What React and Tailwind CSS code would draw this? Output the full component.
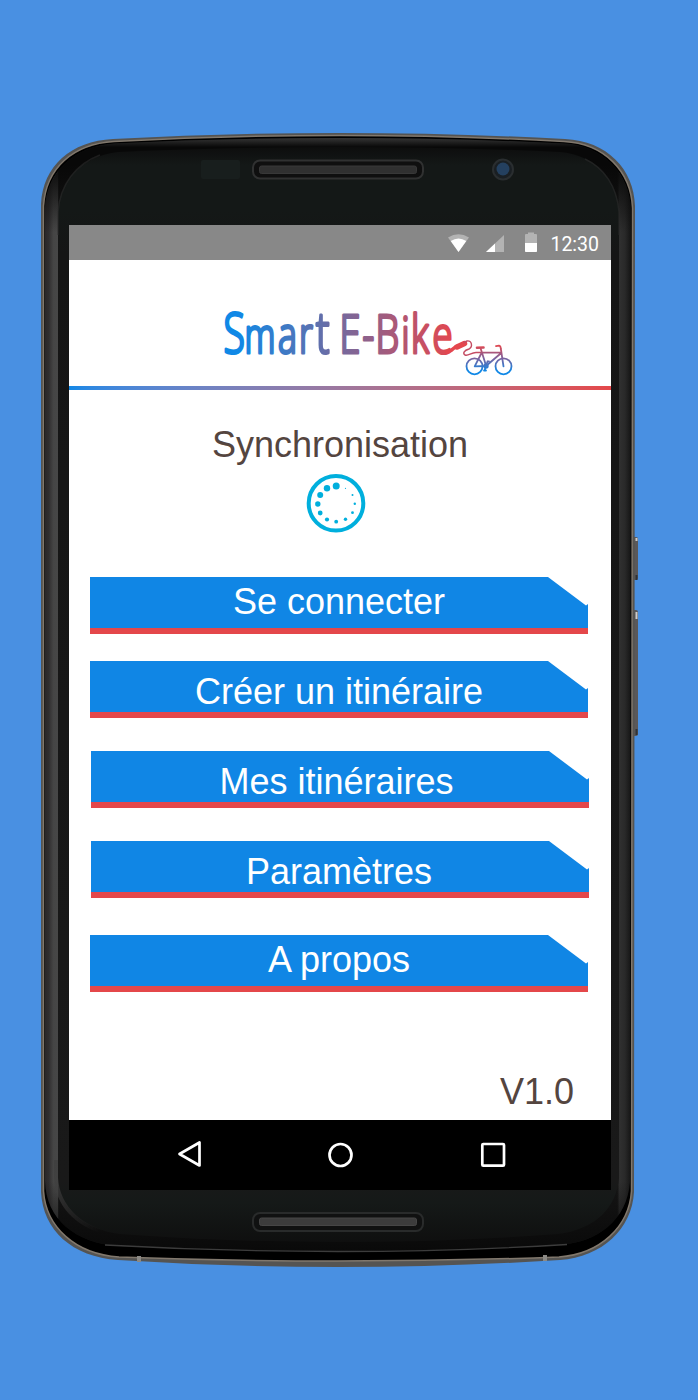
const glyphs = [
  ["S", 223.5, 56],
  ["m", 244.5, 50],
  ["a", 278, 51],
  ["r", 299, 51],
  ["t", 316, 58],
  ["E", 339.5, 54],
  ["-", 362.5, 52],
  ["B", 375.5, 54],
  ["i", 401.5, 50],
  ["k", 411, 53],
  ["e", 432.5, 52],
];

const SQUEEZE = 0.7;

function Logo() {
  return (
    <svg className="h-[126px] w-[542px]" viewBox="69 260 542 126" role="img" aria-label="Smart E-Bike">
      <defs>
        <linearGradient id="word" gradientUnits="userSpaceOnUse" x1={224 / SQUEEZE} y1="0" x2={454 / SQUEEZE} y2="0">
          <stop offset="0.06" stopColor="#1088e6" />
          <stop offset="1" stopColor="#e4474e" />
        </linearGradient>
        <linearGradient id="bike" gradientUnits="userSpaceOnUse" x1="0" y1="346" x2="0" y2="371">
          <stop offset="0" stopColor="#dd4852" />
          <stop offset="0.5" stopColor="#7a63a0" />
          <stop offset="1" stopColor="#1088e6" />
        </linearGradient>
      </defs>
      <text
        y="353.5"
        transform={`scale(${SQUEEZE} 1)`}
        className="font-['Open_Sans',sans-serif] font-light"
        fill="url(#word)"
        stroke="url(#word)"
        strokeWidth="3.2"
        strokeLinejoin="round"
      >
        {glyphs.map(([c, x, size]) => (
          <tspan key={x} x={x / SQUEEZE} fontSize={size}>
            {c}
          </tspan>
        ))}
      </text>
      <g fill="none" strokeLinecap="round" strokeLinejoin="round">
        <path d="M447 352C452 352 454 346 458 346" stroke="#e4474e" strokeWidth="3.5" />
        <path d="M457 347L464.500 343.500" stroke="#e4474e" strokeWidth="5.500" />
        <path d="M464 342.500L467 341C472 340 473 347 469 349C464 350.500 462.500 353 465 355C468 356.500 471 352.500 476 352.500H481" stroke="#c44c63" strokeWidth="1.400" />
        <g stroke="url(#bike)" strokeWidth="1.800">
          <circle cx="474.500" cy="366.300" r="8" />
          <circle cx="503.500" cy="366.300" r="8" />
          <path d="M480.500 348L486 365.500M481.500 352.600L501.500 352.700L486 366L474.700 366.300L481.500 353M496 346.200L499 345.700Q500.500 345.700 500.800 348.500L503.500 366.300" />
          <path d="M477 347.700L483.500 347.500" strokeWidth="2.600" />
          <path d="M487.500 361.500L484.500 370.500M489 361.500H487.500M486 370.500H484" />
          <circle cx="486" cy="366" r="1.800" />
        </g>
      </g>
    </svg>
  );
}

function DeviceBody() {
  return (
    <svg className="absolute inset-0 h-[1400px] w-[698px]" viewBox="0 0 698 1400" fill="none" aria-hidden="true">
      <defs>
        <linearGradient id="side" gradientUnits="userSpaceOnUse" x1="44" y1="0" x2="632" y2="0">
          <stop offset="0" stopColor="#292526" />
          <stop offset="0.008" stopColor="#302e2f" />
          <stop offset="0.016" stopColor="#454545" />
          <stop offset="0.023" stopColor="#474747" />
          <stop offset="0.025" stopColor="#151515" />
          <stop offset="0.975" stopColor="#151515" />
          <stop offset="0.979" stopColor="#303030" />
          <stop offset="0.988" stopColor="#292929" />
          <stop offset="1" stopColor="#111" />
        </linearGradient>
        <linearGradient id="shade" gradientUnits="userSpaceOnUse" x1="0" y1="137" x2="0" y2="1260">
          <stop offset="0" stopColor="#3a3a3a" />
          <stop offset="0.009" stopColor="#080808" />
          <stop offset="0.025" stopColor="#080808" />
          <stop offset="0.085" stopColor="#080808" stopOpacity="0" />
          <stop offset="0.93" stopColor="#080808" stopOpacity="0" />
          <stop offset="1" stopColor="#080808" />
        </linearGradient>
        <linearGradient id="face" gradientUnits="userSpaceOnUse" x1="0" y1="145" x2="0" y2="1247">
          <stop offset="0" stopColor="#0c0c0c" />
          <stop offset="0.018" stopColor="#141817" />
          <stop offset="0.06" stopColor="#141817" />
          <stop offset="0.1" stopColor="#151515" />
          <stop offset="0.94" stopColor="#191919" />
          <stop offset="0.96" stopColor="#151918" />
          <stop offset="1" stopColor="#0e0e0e" />
        </linearGradient>
        <linearGradient id="gloss" gradientUnits="userSpaceOnUse" x1="58" y1="1160" x2="100" y2="1232">
          <stop offset="0" stopColor="#404040" />
          <stop offset="1" stopColor="#404040" stopOpacity="0" />
        </linearGradient>
      </defs>
      <rect x="632" y="537" width="6" height="43" rx="2" fill="#5a5859" />
      <rect x="632" y="610" width="6" height="126" rx="2" fill="#5a5859" />
      <path d="M636.500 538V541M636.500 612V619" stroke="#ccc" strokeWidth="2" />
      <path d="M636.500 575V580M636.500 729V735" stroke="#2f3338" strokeWidth="2" />
      <path
        d="M41 204C43 166 71 141 113 139Q225 133 340 133T565 139C607 141 634 169 635 206L634 1192C632 1229 602 1257 560 1260Q450 1267 338 1267T118 1260C72 1257 43 1230 41 1192Z"
        fill="#555452"
      />
      <path
        d="M43.500 206C46 168 73 144 114 141.500Q225 135.500 340 135.500T564 141.500C604 143.500 631 171 632.500 208L631.500 1191C629 1227 600 1254 559 1257Q450 1261 338 1261T119 1257C75 1254 46 1227 43.500 1191Z"
        fill="#000"
        stroke="#81786d"
        strokeWidth="1.500"
      />
      <path
        d="M45 208C47 172 74 146 115 143.500Q225 138 340 138T563 143.500C602 145 630 173 631 210L630 1182C627 1220 598 1243 557 1245Q450 1251 338 1251T119 1246C75 1243 46 1219 45 1181Z"
        fill="url(#side)"
      />
      <path
        d="M45 208C47 172 74 146 115 143.500Q225 138 340 138T563 143.500C602 145 630 173 631 210L630 1182C627 1220 598 1243 557 1245Q450 1251 338 1251T119 1246C75 1243 46 1219 45 1181Z"
        fill="url(#shade)"
      />
      <path d="M105 1245Q220 1251.500 338 1251.500T567 1244.500" stroke="#3c3c3c" strokeWidth="1.300" />
      <path
        d="M58 212C60 180 82 156 118 152Q225 147 340 147T560 152C596 155 617 180 619 212V1178C616 1208 596 1229 558 1234Q450 1242 338 1242T120 1234C82 1229 60 1208 58 1178Z"
        fill="url(#face)"
      />
      <path d="M58 235V212C60 184 76 164 100 155M619 235V212C617 186 604 168 585 159" stroke="#2c2c2c" strokeWidth="1.500" opacity="0.600" />
      <path d="M56 1160V1178C58 1208 81 1230 118 1235" stroke="url(#gloss)" strokeWidth="4" />

      <rect x="201" y="160" width="39" height="19" rx="2" fill="#181e1d" />
      <g strokeWidth="2">
        <rect x="253" y="160.500" width="170" height="18" rx="7" fill="#0f0f0f" stroke="#303131" />
        <rect x="259.500" y="166" width="157" height="7.500" rx="2" fill="#303030" stroke="#383838" strokeWidth="1" />
        <rect x="253" y="1213" width="170" height="18" rx="7" fill="#101111" stroke="#292b2b" />
        <rect x="259.500" y="1218" width="157" height="7.500" rx="2" fill="#3c3c3c" stroke="#464646" strokeWidth="1" />
      </g>
      <circle cx="503" cy="169.500" r="10" fill="#1a1f23" stroke="#2a2e30" strokeWidth="2" />
      <circle cx="503" cy="169" r="6.500" fill="#24405f" />
      <path d="M139 1256V1262M545 1255V1261" stroke="#8b8985" strokeWidth="4" />
    </svg>
  );
}

function StatusBar() {
  return (
    <div className="flex h-[35px] items-center justify-end bg-[#888888] pr-[12px]">
      <svg className="mr-[10px] h-[35px] w-[92px]" viewBox="448 225 92 35" aria-hidden="true">
        <path d="M448 237.500Q458.500 231 469 237.500L458.500 252Z" fill="#b3b3b3" />
        <path d="M450.700 241Q458.500 236 466.300 241L458.500 252Z" fill="#fff" />
        <path d="M486 252L504 235V252Z" fill="#b3b3b3" />
        <path d="M486 252L495 243.500V252Z" fill="#fff" />
        <path d="M525 252V235Q525 234 526 234H528V232.500H534V234H536Q537 234 537 235V252Z" fill="#b3b3b3" />
        <path d="M525 243H537V251Q537 252 536 252H526Q525 252 525 251Z" fill="#fff" />
      </svg>
      <span className="pt-[4px] font-[Roboto,sans-serif] text-[19.5px] leading-none text-white">12:30</span>
    </div>
  );
}

const dots = [
  [336.7, 486, 3.5],
  [327.5, 488.3, 3.2],
  [320.7, 495, 3],
  [318.3, 504, 2.7],
  [320.7, 513, 2.4],
  [327.5, 519.5, 2.1],
  [336.7, 521.7, 1.9],
  [346, 519.3, 1.7],
  [353, 512.7, 1.4],
  [355.3, 503.7, 1.2],
  [353, 495, 1],
  [346, 488.3, 0.6],
];

function Spinner() {
  return (
    <svg className="h-[60px] w-[60px]" viewBox="306.500 473 60 60" fill="#00afdd" aria-hidden="true">
      <circle cx="336.500" cy="503.300" r="27.300" fill="none" stroke="#00afdd" strokeWidth="4" />
      {dots.map(([x, y, r]) => (
        <circle key={`${x}-${y}`} cx={x} cy={y} r={r} />
      ))}
    </svg>
  );
}

function MenuButton({ label, className }) {
  return (
    <button
      className={`flex h-[57px] w-[498px] shrink-0 justify-center border-b-[6px] border-[#e4474a] bg-[#1086e5] text-[36px] leading-[40px] text-white [clip-path:polygon(0_0,458px_0,496px_28.5px,498px_27px,498px_100%,0_100%)] ${className}`}
    >
      {label}
    </button>
  );
}

function NavBar() {
  return (
    <div className="flex h-[70px] items-center bg-black pl-[107px]">
      <svg className="h-[30px] w-[28px]" viewBox="176 1140 28 30" fill="none" aria-hidden="true">
        <path d="M179.500 1154L199.500 1142.500V1165.500Z" stroke="#fff" strokeWidth="2.700" strokeLinejoin="round" />
      </svg>
      <svg className="ml-[122px] h-[30px] w-[28px]" viewBox="326 1140 28 30" fill="none" aria-hidden="true">
        <circle cx="340.500" cy="1155" r="11" stroke="#fff" strokeWidth="2.700" />
      </svg>
      <svg className="ml-[125px] h-[30px] w-[28px]" viewBox="479 1140 28 30" fill="none" aria-hidden="true">
        <rect x="482.300" y="1144" width="21.700" height="21.700" rx="1" stroke="#fff" strokeWidth="2.700" />
      </svg>
    </div>
  );
}

export default function App() {
  return (
    <div className="relative flex h-[1400px] w-[698px] bg-[#4990e2] pt-[225px] pl-[69px] font-['Liberation_Sans',Arial,sans-serif]">
      <DeviceBody />
      <div className="relative flex h-[965px] w-[542px] flex-col">
        <StatusBar />
        <main className="flex h-[860px] flex-col bg-white">
          <header className="flex flex-col">
            <Logo />
            <div className="h-[4px] bg-linear-to-r from-[#1088e6] to-[#e4474a]" />
          </header>
          <section className="flex flex-col items-center pt-[35px] text-[#54453f]">
            <h1 className="text-[36px] leading-[40px]">Synchronisation</h1>
            <div className="mt-[8px] mr-[8px]">
              <Spinner />
            </div>
          </section>
          <nav className="mt-[44px] flex flex-col pl-[21px]">
            <MenuButton label="Se connecter" className="pt-[5px]" />
            <MenuButton label="Créer un itinéraire" className="mt-[27px] pt-[11px]" />
            <MenuButton label="Mes itinéraires" className="mt-[33px] ml-px pt-[11px] pr-[7px]" />
            <MenuButton label="Paramètres" className="mt-[33px] ml-px pt-[11px] pr-[2px]" />
            <MenuButton label="A propos" className="mt-[37px] pt-[5px]" />
          </nav>
          <p className="mt-auto mb-[8px] pr-[37px] text-right text-[36px] leading-[40px] text-[#54453f]">V1.0</p>
        </main>
        <NavBar />
      </div>
    </div>
  );
}
